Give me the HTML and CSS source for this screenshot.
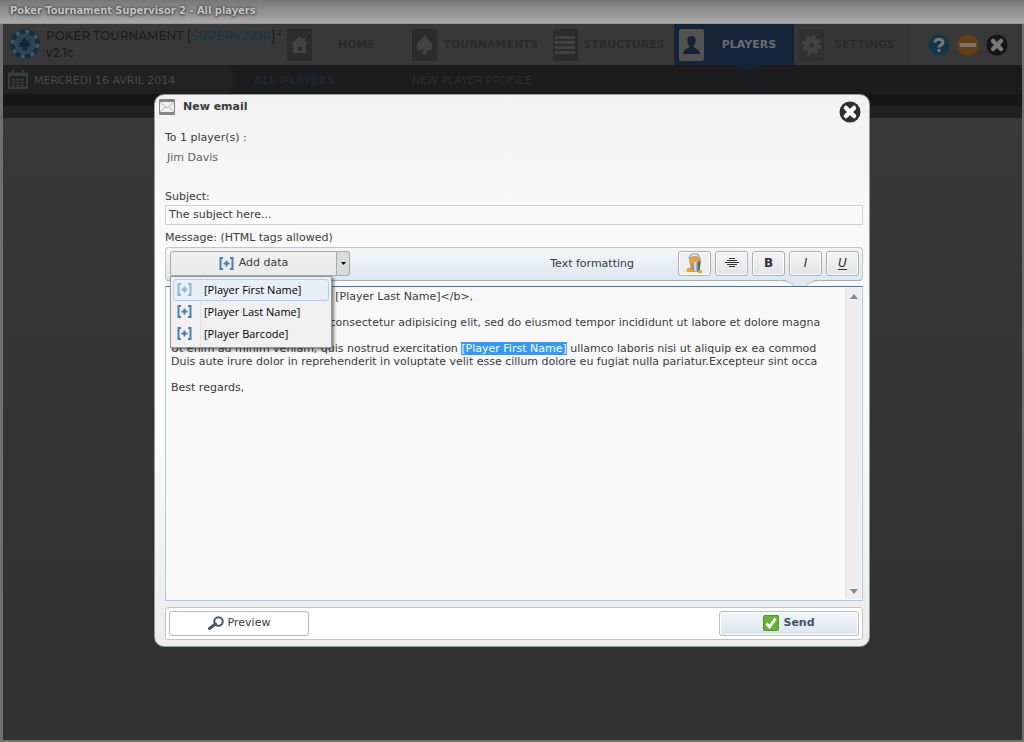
FILE: index.html
```
<!DOCTYPE html>
<html lang="en">
<head>
  <meta charset="UTF-8" />
  <meta name="viewport" content="width=device-width, initial-scale=1.0"/>
  <title>Poker Tournament Supervisor 2 - All players</title>
  <link rel="stylesheet" href="styles.css">
</head>
<body>
  <svg class="defs" width="0" height="0">
    <symbol id="icon-data" viewBox="0 0 15 13">
      <path d="M4 1H1.500v11H4M11 1h2.500v11H11" fill="none" stroke="currentColor" stroke-width="2"/>
      <path d="M7.500 3.500v6M4.500 6.500h6" stroke="currentColor" stroke-width="2"/>
    </symbol>
    <symbol id="icon-close" viewBox="0 0 22 22">
      <circle cx="11" cy="11" r="10.500" fill="currentColor" stroke="none"/>
      <path d="M7 7l8 8M15 7l-8 8" stroke-width="4.500" stroke-linecap="round"/>
    </symbol>
  </svg>

  <div class="window">
    <div class="titlebar">Poker Tournament Supervisor 2 - All players</div>

    <header class="header">
      <div class="brand">
        <svg width="32" height="32" viewBox="0 0 32 32">
          <circle cx="16" cy="16" r="15" fill="#12303f"/>
          <circle cx="16" cy="16" r="12.500" fill="none" stroke="#43545d" stroke-width="4" stroke-dasharray="4 5.817"/>
          <circle cx="16" cy="16" r="9.500" fill="#2c3e48" stroke="#43545d" stroke-width="1"/>
          <circle cx="16" cy="16" r="8" fill="#31434d"/>
          <path d="M15 9c2 3 6 4 6 8 0 2-3 3-4 1l1.500 4h-5l.5-4c-1 2-4 1-4-1 0-3 4-4 5-8z" fill="#0c2a3a"/>
        </svg>
        <div>
          <div class="brand-name">POKER TOURNAMENT [<span>SUPERVISOR</span>]<sup>2</sup></div>
          <div class="brand-version">v2.1c</div>
        </div>
      </div>
      <nav class="tabs">
        <a href="#" class="tab tab-home">
          <svg width="25" height="32" viewBox="0 0 25 32"><rect width="25" height="32" rx="1" fill="#2c2c2c"/><path d="M12.500 7L4 15h2v9h13v-9h2l-3-3V9h-2v1.500zM11 18h4v4h-4z" fill="#424242" fill-rule="evenodd"/></svg>
          <span>HOME</span>
        </a>
        <a href="#" class="tab tab-tournaments">
          <svg width="25" height="32" viewBox="0 0 25 32"><rect width="25" height="32" rx="1" fill="#2c2c2c"/><path d="M12.500 6c2 4 8 7 8 12 0 4-5 5-7 2 0 3 1 4 3.500 5H8c2.500-1 3.500-2 3.500-5-2 3-7 2-7-2 0-5 6-8 8-12z" fill="#424242"/></svg>
          <span>TOURNAMENTS</span>
        </a>
        <a href="#" class="tab tab-structures">
          <svg width="25" height="32" viewBox="0 0 25 32"><rect width="25" height="32" rx="1" fill="#2c2c2c"/><path d="M2 8.500h3M6 8.500h16M2 13.500h3M6 13.500h16M2 18.500h3M6 18.500h16M2 23.500h3M6 23.500h16" stroke="#424242" stroke-width="3"/></svg>
          <span>STRUCTURES</span>
        </a>
        <a href="#" class="tab tab-players active">
          <svg width="25" height="32" viewBox="0 0 25 32"><rect width="25" height="32" rx="2" fill="#525252"/><path d="M12.500 7c-6 0-4.500 8-2 10 0 3-6 2-6.500 8h17c-.5-6-6.500-5-6.500-8 2.500-2 4-10-2-10z" fill="#142335"/></svg>
          <span>PLAYERS</span>
        </a>
        <a href="#" class="tab tab-settings">
          <svg width="25" height="32" viewBox="0 0 25 32"><rect width="25" height="32" rx="1" fill="#303030"/><circle cx="12.500" cy="16" r="8" fill="none" stroke="#424242" stroke-width="4" stroke-dasharray="4 2.283"/><circle cx="12.500" cy="16" r="5" fill="none" stroke="#424242" stroke-width="5"/></svg>
          <span>SETTINGS</span>
        </a>
      </nav>
      <div class="window-buttons">
        <button type="button" aria-label="Help">
          <svg width="22" height="22" viewBox="0 0 22 22"><circle cx="11" cy="11" r="10.500" fill="#14384a"/><path d="M7 8.500C7 4 15 4 15 8.500c0 2.500-4 2.500-4 5M11 15v3" fill="none" stroke="#777" stroke-width="3"/></svg>
        </button>
        <button type="button" aria-label="Minimize">
          <svg width="22" height="22" viewBox="0 0 22 22"><circle cx="11" cy="11" r="10.500" fill="#664011"/><path d="M3 11h16" stroke="#777" stroke-width="4"/></svg>
        </button>
        <button type="button" class="quit" aria-label="Quit">
          <svg width="22" height="22"><use href="#icon-close"/></svg>
        </button>
      </div>
    </header>

    <div class="subbar">
      <div class="date">
        <svg width="20" height="19" viewBox="0 0 20 19"><path d="M1 3.500h18V18H1zM1 5h18M5 0v5M15 0v5" fill="none" stroke="#3b3e40" stroke-width="2"/><path d="M4 9.500h12M4 12.500h12M4 15.500h12" stroke="#3b3e40" stroke-width="2" stroke-dasharray="3.250 1"/></svg>
        <span>MERCREDI 16 AVRIL 2014</span>
      </div>
      <a href="#" class="sub-link current">ALL PLAYERS</a>
      <a href="#" class="sub-link">NEW PLAYER PROFILE</a>
    </div>
    <div class="strip"></div>
  </div>

  <div class="overlay">
    <form class="modal">
      <div class="modal-head">
        <svg width="16" height="16" viewBox="0 0 16 16"><rect width="16" height="16" rx="1" fill="#858585"/><path d="M1 3h14v10H1z" fill="#f1f1f1"/><path d="M1 3l7 6 7-6M1 13l5-5M15 13l-5-5" fill="none" stroke="#b5b5b5"/></svg>
        <h2>New email</h2>
        <button type="button" class="close" aria-label="Close">
          <svg width="22" height="22"><use href="#icon-close"/></svg>
        </button>
      </div>

      <div class="recipients">
        <div>To 1 player(s) :</div>
        <div class="player">Jim Davis</div>
      </div>

      <label for="subject">Subject:</label>
      <input id="subject" type="text" value="The subject here..." />

      <label for="message" class="message-label">Message: (HTML tags allowed)</label>

      <div class="toolbar">
        <div class="add-data">
          <button type="button" class="add-main"><svg width="15" height="13"><use href="#icon-data"/></svg>Add data</button>
          <button type="button" class="add-arrow" aria-label="Choose data" onclick="toggleMenu()"><svg width="5" height="3" viewBox="0 0 5 3"><path d="M0 0h5L2.500 3z" fill="#000"/></svg></button>
          <div class="menu" id="dataMenu">
            <button type="button" class="selected"><svg width="15" height="13"><use href="#icon-data"/></svg><span>[Player First Name]</span></button>
            <button type="button"><svg width="15" height="13"><use href="#icon-data"/></svg><span>[Player Last Name]</span></button>
            <button type="button"><svg width="15" height="13"><use href="#icon-data"/></svg><span>[Player Barcode]</span></button>
          </div>
        </div>
        <div class="formatting">
          <span class="formatting-label">Text formatting</span>
          <button type="button" class="color" aria-label="Text color">
            <svg width="18" height="21" viewBox="0 0 18 21">
              <path d="M3 6C4-1 13-1 14 6" fill="none" stroke="#b0b4b6" stroke-width="1.500"/>
              <path d="M3 6h12l-1.500 13h-8z" fill="#8b959a"/>
              <path d="M8 8h2.500v10.500H8z" fill="#cdd4d8"/>
              <path d="M12 8h2.500l-1 10.500H12z" fill="#59646b"/>
              <ellipse cx="9" cy="6" rx="5.500" ry="2.500" fill="#f29a1c" stroke="#a9adaf"/>
              <path d="M4 6h4v5c0 2-1.500 2-1.500 0V9L5 13z" fill="#f5a31f"/>
              <path d="M1 15.500c2-2 5-1 4.500 1 2 0 2 2.500 0 2.500H2c-2 0-2-2-1-3.500zM12 17.500h4v2.500h-4z" fill="#fba41a"/>
            </svg>
          </button>
          <button type="button" aria-label="Align center">
            <svg width="14" height="10" viewBox="0 0 14 10"><path d="M4 .5h6M2 2.500h10M0 4.500h14M2 6.500h10M4 8.500h6" stroke="#333"/></svg>
          </button>
          <button type="button" class="bold">B</button>
          <button type="button" class="italic">I</button>
          <button type="button" class="underline">U</button>
        </div>
        <svg class="pointer" width="40" height="7" viewBox="0 0 40 7"><path d="M0 0h40C33 1 31 3 26 7H14C9 3 7 1 0 0z" fill="#dfe8f0"/><path d="M0 1.500C7 2 9 3 14 6.500M40 1.500C33 2 31 3 26 6.500" fill="none" stroke="#aab9c4"/></svg>
      </div>

      <div class="editor">
        <textarea id="message" wrap="off" spellcheck="false">
Dear &lt;b&gt;[Player First Name] [Player Last Name]&lt;/b&gt;,

Lorem ipsum dolor sit amet, consectetur adipisicing elit, sed do eiusmod tempor incididunt ut labore et dolore magna

Ut enim ad minim veniam, quis nostrud exercitation [Player First Name] ullamco laboris nisi ut aliquip ex ea commod
Duis aute irure dolor in reprehenderit in voluptate velit esse cillum dolore eu fugiat nulla pariatur.Excepteur sint occa

Best regards,</textarea>
        <div class="scrollbar">
          <svg width="8" height="5" viewBox="0 0 8 5"><path d="M4 0l4 5H0z" fill="#888"/></svg>
          <svg width="8" height="5" viewBox="0 0 8 5"><path d="M0 0h8L4 5z" fill="#888"/></svg>
        </div>
      </div>

      <div class="modal-footer">
        <button type="button" class="preview">
          <svg width="16" height="14" viewBox="0 0 16 14"><circle cx="10.500" cy="5.500" r="4.250" fill="none" stroke="#43596b" stroke-width="2"/><path d="M7.500 8L1.500 12.500" stroke="#43596b" stroke-width="3" stroke-linecap="round"/></svg>Preview
        </button>
        <button type="submit" class="send">
          <svg width="16" height="16" viewBox="0 0 16 16"><rect x=".5" y=".5" width="15" height="15" rx="1" fill="#67b335" stroke="#4f9a26"/><path d="M3.500 8.500l3 3.500 6-8.500" fill="none" stroke="#fff" stroke-width="2.800"/></svg>Send
        </button>
      </div>
    </form>
  </div>

  <script>
    const message = document.getElementById('message');
    const token = '[Player First Name]';
    const start = message.value.lastIndexOf(token);
    message.focus();
    message.setSelectionRange(start, start + token.length);

    function toggleMenu() {
      const menu = document.getElementById('dataMenu');
      menu.hidden = !menu.hidden;
    }
  </script>
</body>
</html>
```
FILE: styles.css
```
* {
  box-sizing: border-box;
}
body {
  margin: 0;
  min-height: 100vh;
  font-family: Verdana, 'DejaVu Sans', sans-serif;
  font-size: 11px;
  line-height: 14px;
  color: #3a3a3e;
}
button, input, textarea {
  font: inherit;
  color: inherit;
}
button {
  cursor: pointer;
}
a {
  text-decoration: none;
}
svg {
  flex: none;
}
.defs {
  position: absolute;
}

/* main window */
.window {
  min-height: 100vh;
  border: solid #6f6f6f;
  border-width: 0 2px 2px 3px;
  background: linear-gradient(#3b3a3a, #323232 80%);
}
.titlebar {
  height: 24px;
  margin: 0 -2px 0 -3px;
  padding: 4px 10px;
  background: linear-gradient(#777, #aaa 95%, #888);
  font-family: Tahoma, 'DejaVu Sans Condensed', 'DejaVu Sans', sans-serif;
  font-weight: bold;
  color: #c4c4c4;
  text-shadow: 0 0 3px #333, 0 1px 3px #444;
}
.header {
  display: flex;
  height: 41px;
  background: #383838;
}
.brand {
  display: flex;
  width: 279px;
  padding: 4px 0 0 6px;
  gap: 5px;
  font-family: Montserrat, Lato, sans-serif;
  font-size: 12px;
  font-weight: 500;
  color: #1c1c1c;
}
.brand-name {
  line-height: 16px;
  white-space: nowrap;
}
.brand-name span {
  color: #163746;
}
.brand-name sup {
  font-size: 8px;
  line-height: 8px;
  margin-left: 2px;
}
.brand-version {
  line-height: 18px;
}
.tabs {
  display: flex;
}
.tab {
  position: relative;
  display: flex;
  align-items: center;
  height: 41px;
  padding: 0 4px 0 5px;
  font-weight: bold;
  color: #2b2b2b;
}
.tab span {
  flex: 1;
  text-align: center;
}
.tab-home {
  width: 127px;
  padding-right: 8px;
}
.tab-tournaments {
  width: 139px;
  padding: 0 3px;
}
.tab-structures {
  width: 126px;
}
.tab-players {
  width: 120px;
}
.tab-settings {
  width: 115px;
  background: #363636;
}
.tab.active {
  padding-right: 0;
  background: #142438;
  color: #6b6b6b;
}
.tab.active::after {
  content: "";
  position: absolute;
  left: 60px;
  top: 100%;
  width: 26px;
  height: 6px;
  background: #142438;
  clip-path: polygon(0 0, 100% 0, 50% 100%);
}
.window-buttons {
  display: flex;
  align-items: center;
  gap: 7px;
  margin-left: auto;
  padding-right: 14px;
}
.window-buttons button, .close {
  display: flex;
  padding: 0;
  border: none;
  background: none;
}
.quit {
  color: #141516;
  stroke: #777;
}
.subbar {
  display: flex;
  align-items: center;
  height: 29px;
  background: #1a1c1d;
}
.subbar span, .sub-link {
  padding-top: 3px;
}
.date {
  display: flex;
  align-items: center;
  gap: 6px;
  width: 233px;
  height: 29px;
  padding-left: 5px;
  background: #1f2122;
  clip-path: polygon(0 0, 226px 0, 100% 50%, 226px 100%, 0 100%);
  color: #48494a;
}
.sub-link {
  margin-left: 77px;
  color: #2e2e2f;
}
.sub-link.current {
  margin-left: 18px;
  font-weight: bold;
  color: #1c2733;
}
.strip {
  height: 24px;
  background: linear-gradient(#151617 50%, #212020 50%);
}

/* new email dialog */
.overlay {
  position: absolute;
  inset: 0;
  display: flex;
  align-items: center;
  justify-content: center;
  padding-bottom: 2px;
}
.modal {
  display: flex;
  flex-direction: column;
  width: 100%;
  max-width: 716px;
  padding: 0 6px 6px 10px;
  border: 1px solid #8ba38b;
  border-radius: 10px;
  background: linear-gradient(#f2f2f2, #fbfbfb 30%, #fbfbfb 60%, #ececec);
}
.modal-head {
  display: flex;
  align-items: flex-start;
  gap: 8px;
  height: 36px;
  margin-left: -6px;
  padding-top: 4px;
}
.modal-head h2 {
  margin: 1px 0 0;
  font-size: 11px;
}
.close {
  margin: 2px 2px 0 auto;
  color: #2a3236;
  stroke: #fff;
}
.recipients {
  display: flex;
  flex-direction: column;
  gap: 6px;
  height: 59px;
}
.player {
  padding-left: 2px;
  color: #5d6166;
}
.modal input {
  width: 100%;
  height: 20px;
  margin-top: 1px;
  padding: 0 3px;
  border: 1px solid #ccd3d6;
  background: #fafafa;
}
.message-label {
  margin: 6px 0 2px;
}
.toolbar {
  position: relative;
  display: flex;
  justify-content: space-between;
  height: 34px;
  padding: 3px 3px 3px 4px;
  border: 1px solid #b9c6ce;
  border-bottom-color: #9fafbb;
  border-radius: 4px;
  background: linear-gradient(#f3f6f8, #dde8f0);
}
.add-data {
  position: relative;
  display: flex;
  height: 25px;
}
.add-main, .add-arrow {
  display: flex;
  align-items: center;
  justify-content: center;
  border: 1px solid #a8aaab;
  background: linear-gradient(#f0f0f0, #e9eceb);
}
.add-main {
  gap: 5px;
  width: 167px;
  border-radius: 3px 0 0 3px;
}
.add-arrow {
  width: 13px;
  padding: 0;
  border-left: none;
  border-radius: 0 3px 3px 0;
  background: #d9dcdd;
}
.add-data svg {
  color: #487fae;
}
.menu {
  position: absolute;
  left: 0;
  top: 25px;
  z-index: 2;
  width: 162px;
  padding: 2px;
  border: 1px solid #979797;
  background: linear-gradient(90deg, #f1f1f1 29px, #e2e3e3 29px, #e2e3e3 30px, #f0f0f0 30px);
  box-shadow: 2px 2px 3px rgba(0,0,0,0.5);
}
.menu[hidden] {
  display: none;
}
.menu button {
  display: flex;
  align-items: center;
  gap: 12px;
  width: 100%;
  height: 22px;
  padding: 0 3px;
  border: 1px solid transparent;
  border-radius: 3px;
  background: none;
  font-family: 'Segoe UI', 'Open Sans', sans-serif;
  color: #000;
  white-space: nowrap;
}
.menu .selected {
  border-color: #aecff7;
  background: rgba(228,238,250,0.6);
}
.menu .selected svg {
  color: #8fb3d2;
}
.formatting {
  display: flex;
  gap: 4px;
}
.formatting-label {
  align-self: center;
  margin-right: 40px;
}
.formatting button {
  display: flex;
  align-items: center;
  justify-content: center;
  width: 33px;
  height: 25px;
  padding: 0;
  border: 1px solid #a9b0b6;
  border-radius: 3px;
  background: linear-gradient(#f4f5f6, #e0e5e9);
  box-shadow: inset 0 0 0 1px #fff;
  font-size: 12px;
  color: #2e2e32;
}
.formatting .color {
  background: #eeefef;
}
.formatting .bold {
  font-weight: bold;
}
.formatting .italic {
  font-style: italic;
}
.formatting .underline {
  font-style: italic;
  text-decoration: underline;
  text-underline-offset: 2px;
}
.pointer {
  position: absolute;
  right: 42px;
  top: 31px;
}
.editor {
  display: flex;
  height: 315px;
  margin-top: 5px;
  border: 1px solid #a9cbe6;
  border-top-color: #3c74a5;
  background: #f9f9f9;
}
.editor textarea {
  flex: 1;
  margin: 3px 5px 0;
  padding: 0;
  border: none;
  outline: none;
  background: none;
  resize: none;
  overflow: hidden;
  line-height: 13px;
  white-space: pre;
  caret-color: #d87020;
}
.editor textarea::selection {
  background: #3399ff;
  color: #fff;
}
.scrollbar {
  display: flex;
  flex-direction: column;
  align-items: center;
  justify-content: space-between;
  width: 16px;
  margin: 1px;
  padding: 6px 0 5px;
  border-left: 1px solid #e2e2e2;
  background: #eee;
}
.modal-footer {
  display: flex;
  justify-content: space-between;
  height: 33px;
  margin-top: 6px;
  padding: 3px;
  border: 1px solid #c4c4c4;
  border-radius: 3px;
  background: #fff;
}
.modal-footer button {
  display: flex;
  align-items: center;
  justify-content: center;
  gap: 4px;
  width: 140px;
  height: 25px;
  border: 1px solid #b5b8bb;
  border-radius: 3px;
  background: #fff;
}
.modal-footer .send {
  border-color: #b3bfcd;
  background: linear-gradient(#f2f5f8, #dde5ee);
  box-shadow: inset 0 0 0 1px #fff;
  font-weight: bold;
  color: #42556c;
}
```
